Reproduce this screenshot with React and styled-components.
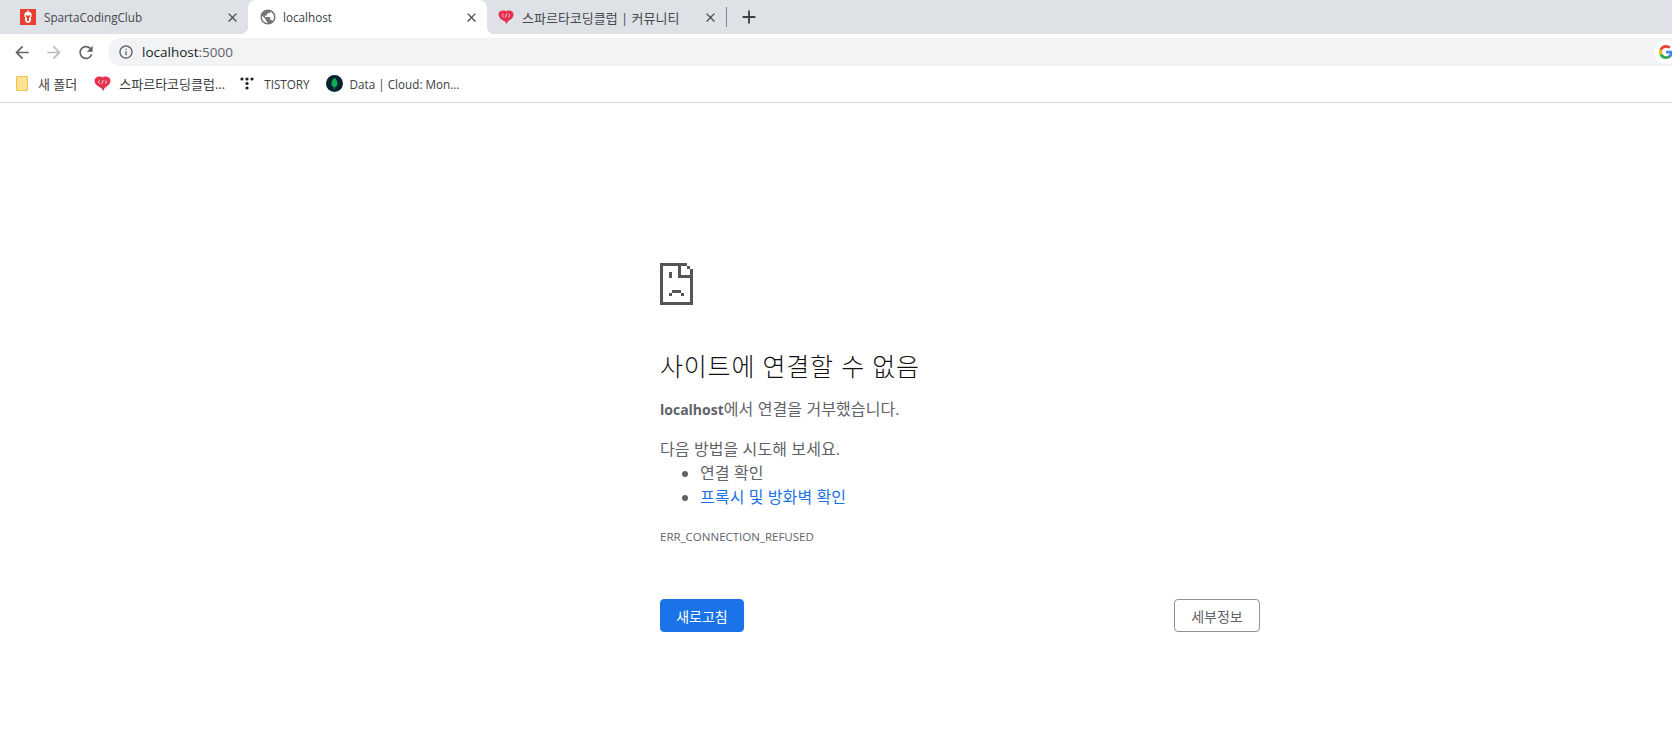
import React from 'react';
import styled, { createGlobalStyle } from 'styled-components';

const uiFont = `'Open Sans', 'Noto Sans CJK KR', sans-serif`;

const GlobalStyle = createGlobalStyle`
  html, body {
    margin: 0;
    padding: 0;
    background: #fff;
    overflow: hidden;
  }
`;

const Window = styled.div`
  width: 1672px;
  height: 730px;
  display: flex;
  flex-direction: column;
  overflow: hidden;
  font-family: ${uiFont};
`;

const TabStrip = styled.div`
  height: 34px;
  flex: none;
  display: flex;
  align-items: stretch;
  padding-left: 9px;
  background: #dee1e6;
`;

const Tab = styled.div`
  position: relative;
  width: 239px;
  display: flex;
  align-items: center;
  gap: ${props => (props.$active ? 6 : 8)}px;
  padding: 0 8px 0 11px;
  box-sizing: border-box;
  color: #4a4d51;
  background: ${props => (props.$active ? '#fff' : 'transparent')};
  border-radius: ${props => (props.$active ? '8px 8px 0 0' : '0')};

  ${props => props.$active && `
    &::before, &::after {
      content: '';
      position: absolute;
      bottom: 0;
      width: 8px;
      height: 8px;
    }
    &::before {
      left: -8px;
      background: radial-gradient(circle at 0 0, transparent 8px, #fff 8.5px);
    }
    &::after {
      right: -8px;
      background: radial-gradient(circle at 100% 0, transparent 8px, #fff 8.5px);
    }
  `}
`;

const TabTitle = styled.span`
  flex: 1;
  min-width: 0;
  font-size: ${props => (props.$ko ? 13 : 11.7)}px;
  color: ${props => (props.$active ? '#3c4043' : '#45484c')};
  white-space: nowrap;
  overflow: hidden;
`;

const Favicon = styled.span`
  display: flex;
  color: ${props => props.$color || 'inherit'};
`;

const TabDivider = styled.div`
  width: 1px;
  height: 20px;
  margin-top: 7px;
  background: #80868b;
`;

const NewTab = styled.div`
  width: 22px;
  margin-left: 11px;
  display: flex;
  align-items: center;
  color: #3c4043;
`;

const Toolbar = styled.div`
  height: 32px;
  flex: none;
  display: flex;
  align-items: flex-end;
  padding-left: 12px;
  background: #fff;
`;

const NavButton = styled.div`
  width: 20px;
  height: 28px;
  margin-right: 12px;
  display: flex;
  align-items: center;
  justify-content: center;
  color: ${props => (props.$disabled ? '#b9bbbe' : '#5f6368')};
`;

const Omnibox = styled.div`
  flex: 1;
  height: 28px;
  display: flex;
  align-items: center;
  gap: 8px;
  padding-left: 10px;
  background: #f1f3f4;
  border-radius: 14px 0 0 14px;
  overflow: hidden;
`;

const Url = styled.span`
  flex: 1;
  font-size: 13.5px;
  color: #202124;
`;

const UrlPort = styled.span`
  color: #5f6368;
`;

const GoogleBadge = styled.div`
  width: 24px;
  height: 24px;
  flex: none;
  margin-right: -6px;
  display: flex;
  align-items: center;
  justify-content: center;
  border-radius: 50%;
  background: #fff;
`;

const Bookmarks = styled.div`
  height: 36px;
  flex: none;
  display: flex;
  align-items: center;
  padding: 0 0 1px 16px;
  box-sizing: content-box;
  height: 35px;
  background: #fff;
  border-bottom: 1px solid #d3d5d8;
`;

const Bookmark = styled.div`
  display: flex;
  align-items: center;
  gap: ${props => props.$gap || 8}px;
  margin-right: ${props => props.$after || 17}px;
  font-size: ${props => (props.$ko ? 13 : 11.7)}px;
  color: #3c4043;
  white-space: nowrap;
`;

const Page = styled.main`
  flex: 1;
  width: 600px;
  margin-left: 660px;
  padding-top: 160px;
  color: #5f6368;
  font-size: 16px;
  letter-spacing: 0.1px;
`;

const SadIcon = styled.svg`
  display: block;
  shape-rendering: crispEdges;
`;

const Heading = styled.h1`
  margin: 44px 0 0;
  font-size: 25px;
  line-height: 34px;
  font-weight: 300;
  letter-spacing: 0.8px;
  color: #111;
`;

const Line = styled.p`
  margin: ${props => props.$top}px 0 0;
  line-height: 24px;
`;

const Host = styled.b`
  font-size: 14px;
  font-weight: 700;
  letter-spacing: 0;
`;

const Hints = styled.ul`
  margin: 0;
  padding-left: 40px;
  line-height: 24px;
`;

const HintLink = styled.a`
  color: #1a73e8;
  text-decoration: none;
`;

const ErrorCode = styled.div`
  margin-top: 20px;
  font-size: 11.5px;
  line-height: 16px;
  letter-spacing: 0;
`;

const Actions = styled.div`
  margin-top: 54px;
  display: flex;
  justify-content: space-between;
`;

const Button = styled.button`
  height: 33px;
  width: ${props => props.$w}px;
  padding: 0;
  box-sizing: border-box;
  font-family: inherit;
  font-size: 14px;
  border-radius: 4px;
  border: 1px solid ${props => (props.$primary ? '#1a73e8' : '#8d9094')};
  background: ${props => (props.$primary ? '#1a73e8' : '#fff')};
  color: ${props => (props.$primary ? '#fff' : '#5f6368')};
`;

const Glyph = ({ d, size = 16 }) => (
  <svg width={size} height={size} viewBox="0 0 24 24" fill="currentColor">
    <path d={d} />
  </svg>
);

const CLOSE = 'M19 6.41L17.59 5 12 10.59 6.41 5 5 6.41 10.59 12 5 17.59 6.41 19 12 13.41 17.59 19 19 17.59 13.41 12z';
const BACK = 'M20 11H7.83l5.59-5.59L12 4l-8 8 8 8 1.41-1.41L7.83 13H20v-2z';
const FORWARD = 'M12 4l-1.41 1.41L16.17 11H4v2h12.17l-5.58 5.59L12 20l8-8z';
const RELOAD = 'M17.65 6.35A7.958 7.958 0 0012 4c-4.42 0-7.99 3.58-7.99 8s3.57 8 7.99 8c3.73 0 6.84-2.55 7.73-6h-2.08A5.99 5.99 0 0112 18c-3.31 0-6-2.69-6-6s2.69-6 6-6c1.66 0 3.14.69 4.22 1.78L13 11h7V4l-2.35 2.35z';
const INFO = 'M11 7h2v2h-2zm0 4h2v6h-2zm1-9C6.48 2 2 6.48 2 12s4.48 10 10 10 10-4.48 10-10S17.52 2 12 2zm0 18c-4.41 0-8-3.59-8-8s3.59-8 8-8 8 3.59 8 8-3.59 8-8 8z';
const GLOBE = 'M12 2C6.48 2 2 6.48 2 12s4.48 10 10 10 10-4.48 10-10S17.52 2 12 2zm-1 17.93c-3.95-.49-7-3.85-7-7.93 0-.62.08-1.21.21-1.79L9 15v1c0 1.1.9 2 2 2v1.93zm6.9-2.54c-.26-.81-1-1.39-1.9-1.39h-1v-3c0-.55-.45-1-1-1H8v-2h2c.55 0 1-.45 1-1V7h2c1.1 0 2-.9 2-2v-.41c2.93 1.19 5 4.06 5 7.41 0 2.08-.8 3.97-2.1 5.39z';
const PLUS = 'M19 13h-6v6h-2v-6H5v-2h6V5h2v6h6v2z';

const SpartaIcon = () => (
  <svg width="16" height="16" viewBox="0 0 16 16">
    <rect width="16" height="16" fill="#e83f2e" />
    <path d="M7.200 1.500h1.600v1.200c1.700.2 2.800 1.300 2.800 3V7.500l-1 1 .6 1.500-1 3.200L8 14l-2.200-.8-1-3.200.6-1.500-1-1V5.700c0-1.700 1.100-2.800 2.800-3z" fill="#fff" />
    <path d="M5.800 6.300h1.500l.7 1 .7-1h1.500v1.300L9 9v3H7V9L5.800 7.600z" fill="#e83f2e" />
  </svg>
);

const BubbleIcon = ({ size = 16 }) => (
  <svg width={size} height={size} viewBox="0 0 16 16">
    <path d="M5 1.500h1.500L8 2.300l1.500-.8H11c2.500 0 4.500 1.500 4.500 4 0 3.200-3 5.300-5.300 6.500L8.600 15 7 12.500C4 11 .5 8.800.5 5.500c0-2.500 2-4 4.500-4z" fill="#e8304f" />
    <path d="M5.600 5.200L4 6.600l1.600 1.400M10.400 5.200L12 6.600l-1.600 1.400M8.700 4.800L7.300 8.400" fill="none" stroke="#fff" strokeWidth="0.8" />
  </svg>
);

const FolderIcon = () => (
  <svg width="12" height="15" viewBox="0 0 12 15">
    <path d="M1 .5h10a.5.5 0 01.500.5v13a.5.5 0 01-.500.500H1a.5.5 0 01-.500-.500V1A.5.5 0 011 .5z" fill="#fde293" stroke="#f0c14b" />
  </svg>
);

const TistoryIcon = () => (
  <svg width="14" height="13" viewBox="0 0 14 13" fill="#1d1d1d">
    <circle cx="2" cy="2" r="1.600" />
    <circle cx="7" cy="2" r="1.600" />
    <circle cx="12" cy="2" r="1.600" />
    <circle cx="7" cy="6.500" r="1.600" />
    <circle cx="7" cy="11" r="1.600" />
  </svg>
);

const MongoIcon = () => (
  <svg width="17" height="17" viewBox="0 0 17 17">
    <circle cx="8.500" cy="8.500" r="8.500" fill="#06232e" />
    <path d="M8.500 2.500c-2.200 2.400-3 4.200-3 6 0 1.900 1.300 3.200 2.600 3.800l.2 2.200h.5l.2-2.200c1.300-.6 2.500-1.900 2.500-3.800 0-1.800-.8-3.600-3-6z" fill="#13aa52" />
  </svg>
);

const GoogleIcon = () => (
  <svg width="14" height="14" viewBox="0 0 18 18">
    <path d="M17.640 9.200c0-.640-.060-1.250-.160-1.840H9v3.480h4.840a4.140 4.140 0 01-1.800 2.720v2.260h2.920c1.700-1.570 2.680-3.880 2.680-6.620z" fill="#4285f4" />
    <path d="M9 18c2.430 0 4.470-.800 5.960-2.180l-2.920-2.260c-.800.540-1.830.860-3.040.860-2.340 0-4.320-1.580-5.030-3.710H.960v2.330A9 9 0 009 18z" fill="#34a853" />
    <path d="M3.970 10.710A5.410 5.410 0 013.680 9c0-.590.100-1.170.290-1.710V4.960H.960A9 9 0 000 9c0 1.450.350 2.830.960 4.040z" fill="#fbbc05" />
    <path d="M9 3.580c1.320 0 2.510.450 3.440 1.350l2.580-2.590C13.460.890 11.430 0 9 0A9 9 0 00.960 4.960l3.010 2.330C4.680 5.160 6.660 3.580 9 3.580z" fill="#ea4335" />
  </svg>
);

// pixel-art sad page on a 3px grid
const SadPage = () => (
  <SadIcon width="33" height="42" viewBox="0 0 33 42" fill="#555">
    <path d="M0 0h27v3H3v36h27V6h3v36H0z" />
    <path d="M27 3h3v3h-3z" />
    <path d="M18 3h3v9h12v3H18z" />
    <path d="M9 9h3v6H9z" />
    <path d="M12 27h9v3h3v3h-3v-3h-9v3H9v-3h3z" />
  </SadIcon>
);

export default function App() {
  return (
    <Window>
      <GlobalStyle />
      <TabStrip>
        <Tab>
          <SpartaIcon />
          <TabTitle>SpartaCodingClub</TabTitle>
          <Glyph d={CLOSE} size={15} />
        </Tab>
        <Tab $active>
          <Favicon $color="#757575"><Glyph d={GLOBE} size={18} /></Favicon>
          <TabTitle $active>localhost</TabTitle>
          <Glyph d={CLOSE} size={15} />
        </Tab>
        <Tab>
          <BubbleIcon />
          <TabTitle $ko>스파르타코딩클럽 | 커뮤니티</TabTitle>
          <Glyph d={CLOSE} size={15} />
        </Tab>
        <TabDivider />
        <NewTab><Glyph d={PLUS} size={22} /></NewTab>
      </TabStrip>
      <Toolbar>
        <NavButton><Glyph d={BACK} size={21} /></NavButton>
        <NavButton $disabled><Glyph d={FORWARD} size={21} /></NavButton>
        <NavButton><Glyph d={RELOAD} size={21} /></NavButton>
        <Omnibox>
          <Favicon $color="#5f6368"><Glyph d={INFO} size={16} /></Favicon>
          <Url>localhost<UrlPort>:5000</UrlPort></Url>
          <GoogleBadge><GoogleIcon /></GoogleBadge>
        </Omnibox>
      </Toolbar>
      <Bookmarks>
        <Bookmark $ko $gap={10}><FolderIcon />새 폴더</Bookmark>
        <Bookmark $ko $after={15}><BubbleIcon size={17} />스파르타코딩클럽...</Bookmark>
        <Bookmark $gap={10} $after={16}><TistoryIcon />TISTORY</Bookmark>
        <Bookmark $gap={7}><MongoIcon />Data | Cloud: Mon...</Bookmark>
      </Bookmarks>
      <Page>
        <SadPage />
        <Heading>사이트에 연결할 수 없음</Heading>
        <Line $top={14}><Host>localhost</Host>에서 연결을 거부했습니다.</Line>
        <Line $top={15}>다음 방법을 시도해 보세요.</Line>
        <Hints>
          <li>연결 확인</li>
          <li><HintLink>프록시 및 방화벽 확인</HintLink></li>
        </Hints>
        <ErrorCode>ERR_CONNECTION_REFUSED</ErrorCode>
        <Actions>
          <Button $primary $w={84}>새로고침</Button>
          <Button $w={86}>세부정보</Button>
        </Actions>
      </Page>
    </Window>
  );
}
